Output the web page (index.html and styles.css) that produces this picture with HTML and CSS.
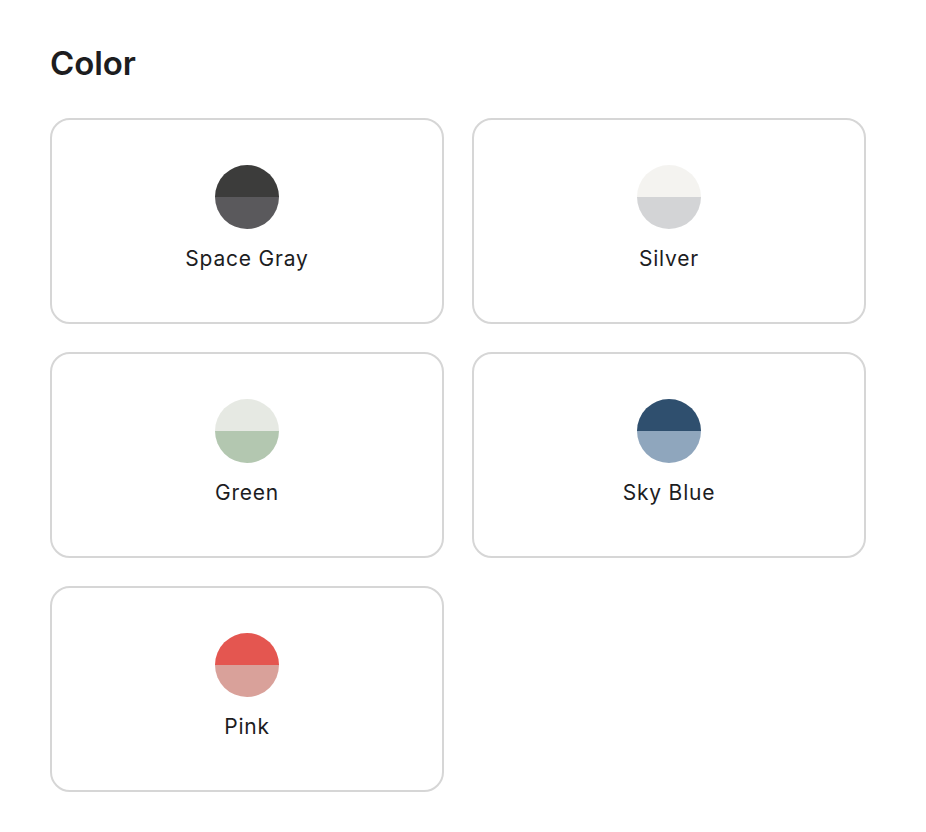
FILE: index.html
```html
<!DOCTYPE html>
<html lang="en">
<head>
  <meta charset="UTF-8" />
  <meta name="viewport" content="width=device-width, initial-scale=1" />
  <title>Color</title>
  <link rel="stylesheet" href="styles.css">
</head>
<body>
  <section class="picker">
    <h2 class="picker-title">Color</h2>
    <div class="swatch-grid">
      <button class="swatch">
        <span class="dot" style="--top:#3c3c3b; --bottom:#5a595c"></span>
        <span class="swatch-name">Space Gray</span>
      </button>
      <button class="swatch">
        <span class="dot" style="--top:#f4f3f0; --bottom:#d3d4d6"></span>
        <span class="swatch-name">Silver</span>
      </button>
      <button class="swatch">
        <span class="dot" style="--top:#e6e9e3; --bottom:#b3c7b0"></span>
        <span class="swatch-name">Green</span>
      </button>
      <button class="swatch">
        <span class="dot" style="--top:#2f4f6e; --bottom:#8fa6bd"></span>
        <span class="swatch-name">Sky Blue</span>
      </button>
      <button class="swatch">
        <span class="dot" style="--top:#e45650; --bottom:#d9a19a"></span>
        <span class="swatch-name">Pink</span>
      </button>
    </div>
  </section>
</body>
</html>
```

FILE: styles.css
```css
* {
  box-sizing: border-box;
}
body {
  margin: 0;
  background: #fff;
  color: #1d1d1f;
  font-family: Inter, 'Noto Sans', sans-serif;
}
.picker {
  width: 816px;
  margin: 0 0 0 50px;
  padding-top: 45px;
}
.picker-title {
  margin: 0 0 37px;
  font-size: 33px;
  line-height: 36px;
  font-weight: 600;
  letter-spacing: -0.1px;
}
.swatch-grid {
  display: grid;
  grid-template-columns: 1fr 1fr;
  gap: 28px;
}
.swatch {
  height: 206px;
  display: flex;
  flex-direction: column;
  align-items: center;
  justify-content: center;
  gap: 18px;
  padding: 0 0 6px;
  background: #fff;
  border: 2px solid #d6d6d6;
  border-radius: 20px;
  font: inherit;
  color: inherit;
  cursor: pointer;
}
.dot {
  width: 64px;
  height: 64px;
  border-radius: 50%;
  background: linear-gradient(var(--top) 50%, var(--bottom) 50%);
}
.swatch-name {
  font-size: 21px;
  line-height: 24px;
  letter-spacing: 0.8px;
}
```
